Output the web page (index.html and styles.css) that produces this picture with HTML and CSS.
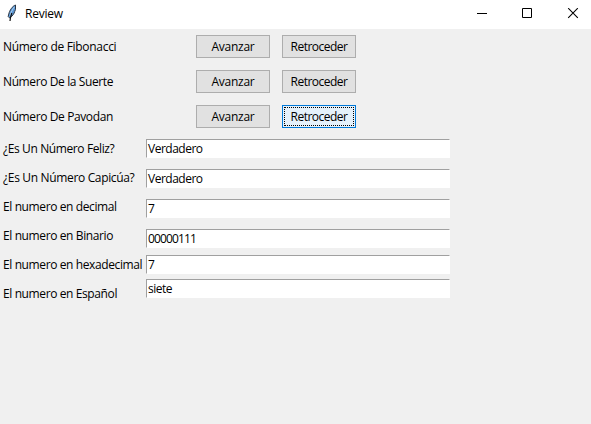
FILE: index.html
```html
<!DOCTYPE html>
<html lang="es">
<head>
<meta charset="utf-8">
<title>Review</title>
<link rel="stylesheet" href="styles.css">
</head>
<body>
<header class="titlebar">
  <svg class="feather" width="12" height="18" viewBox="0 0 12 18">
    <path d="M9.500 1C6.500 2 3.500 6.500 2.800 10L2.200 12.500 3.700 14C6.500 12 8.300 9.500 8.700 7.500L9.500 5.500Z" fill="#5b96d2" stroke="#2a3442" stroke-width="1"/>
    <path d="M8.300 3C6.500 5.500 4.800 8.500 4 11.500" fill="none" stroke="#a9d0f5" stroke-width="1"/>
    <path d="M5.800 9C4.800 12 4.200 14 4 17" fill="none" stroke="#111" stroke-width="1.200"/>
  </svg>
  <span class="title">Review</span>
  <svg class="controls" width="102" height="11" viewBox="0 0 102 11" fill="none" stroke="#000">
    <path d="M0 5.500H10"/>
    <path d="M45.500 .5H54.500V9.500H45.500Z"/>
    <path d="M91.200 .2L100.800 9.800M100.800 .2L91.200 9.800" stroke-width="1.100"/>
  </svg>
</header>
<main>
  <section class="sequences">
    <div class="sequence"><span class="label fibonacci">Número de Fibonacci</span><button class="avanzar">Avanzar</button><button>Retroceder</button></div>
    <div class="sequence"><span class="label">Número De la Suerte</span><button class="avanzar">Avanzar</button><button>Retroceder</button></div>
    <div class="sequence"><span class="label">Número De Pavodan</span><button class="avanzar">Avanzar</button><button class="focused">Retroceder</button></div>
  </section>
  <section class="results">
    <div class="labels">
      <span class="label">¿Es Un Número Feliz?</span>
      <span class="label capicua">¿Es Un Número Capicúa?</span>
      <span class="label">El numero en decimal</span>
      <span class="label">El numero en Binario</span>
      <span class="label">El numero en hexadecimal</span>
      <span class="label">El numero en Español</span>
    </div>
    <div class="fields">
      <div class="field">Verdadero</div>
      <div class="field">Verdadero</div>
      <div class="field">7</div>
      <div class="field binary">00000111</div>
      <div class="field">7</div>
      <div class="field">siete</div>
    </div>
  </section>
</main>
</body>
</html>
```
FILE: styles.css
```css
* { box-sizing: border-box; }
body {
  margin: 0;
  height: 424px;
  overflow: hidden;
  background: #f0f0f0;
  color: #000;
  font: 12px/15px "Open Sans", "Noto Sans", sans-serif;
  letter-spacing: -0.39px;
}
.titlebar {
  display: flex;
  height: 29px;
  padding: 4px 12px 0 6px;
  background: #fff;
}
.title { margin: 2px auto 0 7px; letter-spacing: -0.25px; }
.controls { margin-top: 4px; }
.label { white-space: nowrap; }
.fibonacci { letter-spacing: -0.3px; }
.capicua { letter-spacing: -0.34px; }
.sequences {
  display: grid;
  gap: 12px;
  padding: 6px 0 0 3px;
}
.sequence {
  display: flex;
  align-items: center;
  height: 23px;
}
.sequence .label { width: 193px; }
button {
  width: 74px;
  height: 23px;
  padding: 0 0 1px;
  border: 1px solid #adadad;
  border-radius: 0;
  background: #e1e1e1;
  color: #000;
  font: inherit;
  letter-spacing: -0.5px;
}
.avanzar { margin-right: 12px; letter-spacing: -0.25px; }
.focused {
  border-color: #0078d7;
  background: #e5f1fb;
  outline: 1px dotted #000;
  outline-offset: -3px;
}
.results {
  display: grid;
  grid-template-columns: 143px 304px;
  padding: 11px 0 0 3px;
}
.labels {
  display: grid;
  grid-auto-rows: 15px;
  row-gap: 14px;
  padding-top: 2px;
}
.fields {
  display: grid;
  grid-template-rows: 30px 30px 30px 26px 24px 19px;
}
.field {
  height: 19px;
  padding: 1px 1px 0;
  border: 1px solid #fff;
  border-top-color: #a0a0a0;
  border-left-color: #a0a0a0;
  background: #fff;
  letter-spacing: -0.5px;
}
.binary { letter-spacing: -0.87px; }
```
